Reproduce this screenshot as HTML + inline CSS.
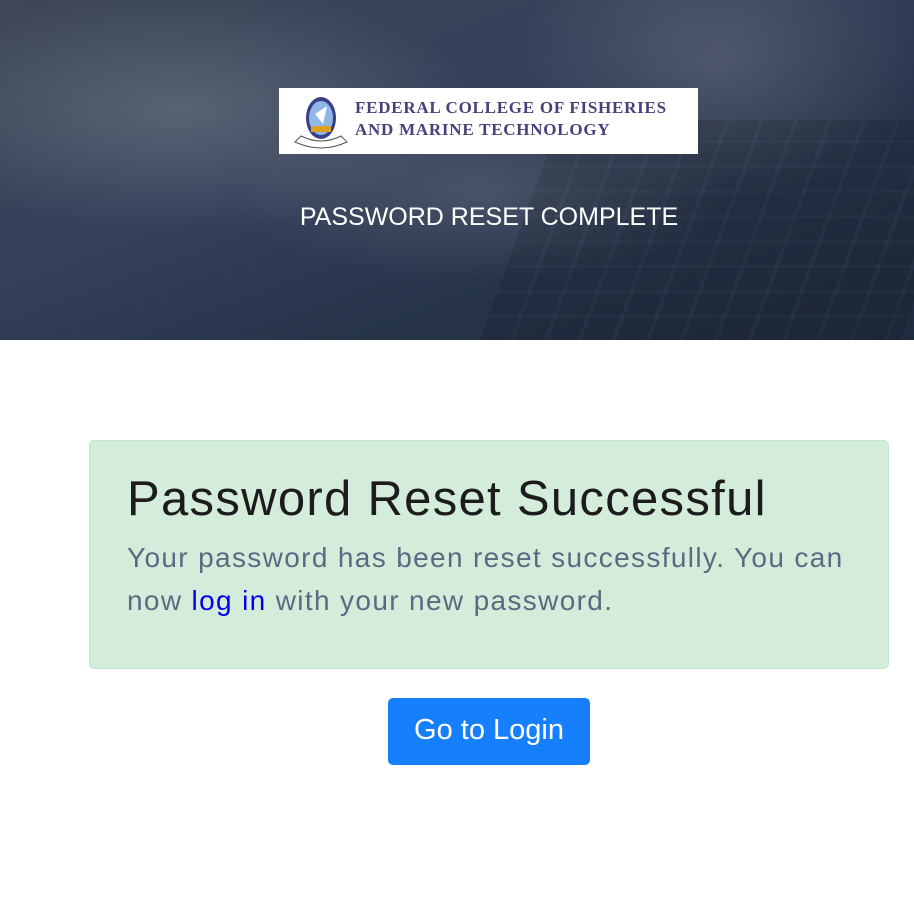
<!DOCTYPE html>
<html><head><meta charset="utf-8"><style>
html,body{margin:0;padding:0;width:914px;height:906px;overflow:hidden;background:#fff;font-family:"Liberation Sans",sans-serif}
.hero{position:absolute;left:0;top:0;width:914px;height:340px;background:
radial-gradient(ellipse 300px 120px at 180px 110px,rgba(120,130,145,.5),transparent),
radial-gradient(ellipse 250px 90px at 480px 190px,rgba(110,120,135,.4),transparent),
radial-gradient(ellipse 200px 140px at 720px 60px,rgba(120,125,140,.4),transparent),
linear-gradient(160deg,#3d4758 0%,#35415a 40%,#263349 70%,#1f2b3f 100%)}
.kb{position:absolute;left:520px;top:120px;width:420px;height:220px;background:repeating-linear-gradient(90deg,rgba(0,0,0,.2) 0 30px,rgba(70,80,95,.2) 30px 34px),repeating-linear-gradient(0deg,rgba(0,0,0,.15) 0 22px,rgba(80,90,105,.2) 22px 25px);opacity:.35;transform:skewX(-20deg)}
.logo{position:absolute;left:279px;top:88px;width:419px;height:66px;background:#fff}
.logo .t{position:absolute;left:76px;top:9px;font-family:"Liberation Serif",serif;font-weight:bold;color:#4a3f7a;font-size:17px;line-height:22px;letter-spacing:.75px}
.title{position:absolute;left:0;width:978px;top:203px;text-align:center;color:#fff;font-size:25px}
.alert{position:absolute;left:89px;top:440px;width:800px;height:229px;background:#d4edda;border:1px solid #c3e6cb;border-radius:5px;box-sizing:border-box}
h1{position:absolute;left:37px;top:30px;margin:0;font-weight:normal;font-size:49px;color:#1c1c1c;letter-spacing:1.3px}
p{position:absolute;left:37px;top:95px;margin:0;width:745px;font-size:28px;line-height:43px;color:#5a6a82;letter-spacing:1.35px}
a{color:#0000ee;text-decoration:none}
.btn{position:absolute;left:388px;top:698px;width:202px;height:67px;background:#167ffc;border-radius:5px;color:#fff;font-size:29px;text-align:center;line-height:65px}
</style></head><body>
<div class="hero"><div class="kb"></div></div>
<div class="logo">
<svg width="60" height="60" style="position:absolute;left:12px;top:4px" viewBox="0 0 60 60">
<ellipse cx="30" cy="26" rx="15" ry="21" fill="#3a3f8a"/>
<ellipse cx="30" cy="26" rx="12" ry="17" fill="#8fb8e6"/>
<path d="M24 22 L36 14 L32 32 Z" fill="#fff"/>
<rect x="20" y="34" width="20" height="6" fill="#e0a020"/>
<path d="M4 50 Q30 62 56 50 L50 44 Q30 54 10 44 Z" fill="#fff" stroke="#555" stroke-width="1"/>
</svg>
<div class="t">FEDERAL COLLEGE OF FISHERIES<br>AND MARINE TECHNOLOGY</div>
</div>
<div class="title">PASSWORD RESET COMPLETE</div>
<div class="alert">
<h1>Password Reset Successful</h1>
<p>Your password has been reset successfully. You can now <a>log in</a> with your new password.</p>
</div>
<div class="btn">Go to Login</div>
</body></html>
